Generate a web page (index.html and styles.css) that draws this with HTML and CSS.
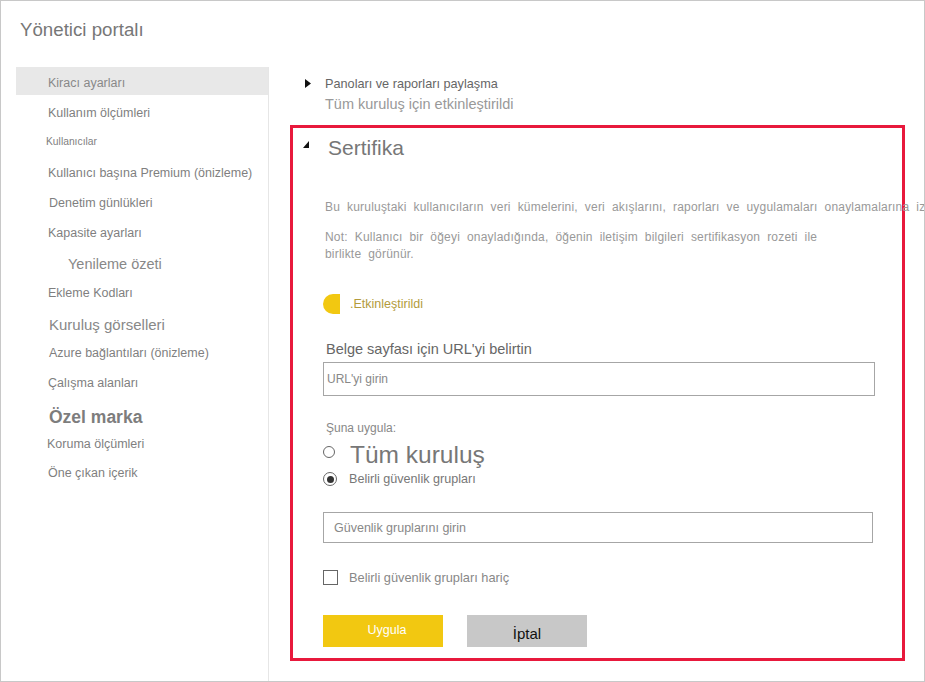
FILE: index.html
```html
<!DOCTYPE html>
<html lang="tr">
<head>
<meta charset="utf-8">
<title>Yönetici portalı</title>
<link rel="stylesheet" href="styles.css">
</head>
<body>
<div class="frame">
  <h1 class="title">Yönetici portalı</h1>
  <div class="layout">
    <nav class="sidebar">
      <div class="item selected">Kiracı ayarları</div>
      <div class="item first">Kullanım ölçümleri</div>
      <div class="item small">Kullanıcılar</div>
      <div class="item">Kullanıcı başına Premium (önizleme)</div>
      <div class="item shifted">Denetim günlükleri</div>
      <div class="item">Kapasite ayarları</div>
      <div class="item sub">Yenileme özeti</div>
      <div class="item">Ekleme Kodları</div>
      <div class="item large">Kuruluş görselleri</div>
      <div class="item shifted">Azure bağlantıları (önizleme)</div>
      <div class="item">Çalışma alanları</div>
      <div class="item brand">Özel marka</div>
      <div class="item tight">Koruma ölçümleri</div>
      <div class="item">Öne çıkan içerik</div>
    </nav>
    <main class="main">
      <div class="setting">
        <svg class="caret-right" width="6" height="9" viewBox="0 0 6 9"><polygon points="0,0 6,4.5 0,9" fill="#111"/></svg>
        <div>
          <div class="setting-name">Panoları ve raporları paylaşma</div>
          <div class="setting-status">Tüm kuruluş için etkinleştirildi</div>
        </div>
      </div>
      <section class="panel">
        <div class="panel-head">
          <svg class="caret-down" width="6" height="7" viewBox="0 0 6 7"><polygon points="6,0 6,7 0,7" fill="#111"/></svg>
          <h2 class="panel-title">Sertifika</h2>
        </div>
        <p class="desc">Bu kuruluştaki kullanıcıların veri kümelerini, veri akışlarını, raporları ve uygulamaları onaylamalarına izin verin.</p>
        <p class="note">Not: Kullanıcı bir öğeyi onayladığında, öğenin iletişim bilgileri sertifikasyon rozeti ile birlikte görünür.</p>
        <div class="toggle-row">
          <span class="toggle"></span>
          <span class="toggle-label">.Etkinleştirildi</span>
        </div>
        <div class="field-label">Belge sayfası için URL'yi belirtin</div>
        <div class="input url">URL'yi girin</div>
        <div class="apply-label">Şuna uygula:</div>
        <div class="radio-row big">
          <span class="radio"></span>
          <span class="radio-text-big">Tüm kuruluş</span>
        </div>
        <div class="radio-row">
          <span class="radio checked"></span>
          <span class="radio-text">Belirli güvenlik grupları</span>
        </div>
        <div class="input groups">Güvenlik gruplarını girin</div>
        <div class="check-row">
          <span class="checkbox"></span>
          <span class="check-text">Belirli güvenlik grupları hariç</span>
        </div>
        <div class="buttons">
          <button class="btn primary">Uygula</button>
          <button class="btn secondary">İptal</button>
        </div>
      </section>
    </main>
  </div>
</div>
</body>
</html>
```

FILE: styles.css
```css
* { box-sizing: border-box; }
html, body { margin: 0; padding: 0; background: #fff; }
body {
  font-family: "Liberation Sans", Arial, sans-serif;
  color: #808080;
}
.frame {
  width: 925px;
  height: 682px;
  border: 1px solid #c8c8c8;
  overflow: hidden;
  display: flex;
  flex-direction: column;
}
.title {
  margin: 0;
  padding: 18px 0 0 19px;
  height: 66px;
  font-size: 18.7px;
  line-height: 22px;
  font-weight: normal;
  color: #777;
}
.layout {
  flex: 1;
  display: flex;
}
.sidebar {
  width: 253px;
  margin-left: 15px;
  border-right: 1px solid #e6e6e6;
  flex-shrink: 0;
}
.item {
  height: 30px;
  line-height: 30px;
  padding-left: 32px;
  font-size: 12.5px;
  color: #7f7f7f;
  white-space: nowrap;
}
.item.selected {
  height: 28px;
  line-height: 32px;
  background: #e8e8e8;
  color: #888;
}
.item.first { margin-top: 3px; }
.item.shifted { padding-left: 33px; }
.item.small { font-size: 10.3px; padding-left: 30px; line-height: 28px; }
.item.sub { font-size: 14.5px; padding-left: 52px; line-height: 32px; color: #888; }
.item.large { font-size: 15px; line-height: 34px; padding-left: 33px; color: #888; }
.item.brand { font-size: 17.5px; font-weight: bold; height: 31px; line-height: 38px; padding-left: 33px; color: #7d7d7d; }
.item.tight { height: 29px; padding-left: 31px; }

.main {
  flex: 1;
  padding-top: 9px;
  min-width: 0;
}
.setting {
  display: flex;
  align-items: flex-start;
  padding-left: 36px;
}
.caret-right { margin-top: 3px; margin-right: 14px; flex-shrink: 0; }
.setting-name { font-size: 12.7px; color: #666; line-height: 16px; }
.setting-status { font-size: 14.5px; color: #999; line-height: 20px; margin-top: 2px; }

.panel {
  margin: 11px 0 0 21px;
  width: 615px;
  height: 536px;
  border: 3px solid #e8193c;
  padding: 0 0 0 30px;
}
.panel-head {
  display: flex;
  align-items: center;
  margin-left: -20px;
  margin-top: 8px;
  height: 24px;
}
.caret-down { margin-right: 19px; margin-top: -8px; }
.panel-title {
  margin: 0;
  font-size: 21px;
  font-weight: normal;
  color: #777;
  line-height: 24px;
}
.desc, .note {
  font-size: 12px;
  color: #999;
  letter-spacing: 0.2px;
  word-spacing: 3.4px;
}
.desc {
  margin: 39px 0 0 2px;
  line-height: 16px;
  white-space: nowrap;
}
.note {
  margin: 14px 0 0 2px;
  width: 510px;
  line-height: 17px;
}
.toggle-row {
  display: flex;
  align-items: center;
  margin-top: 31px;
  height: 20px;
}
.toggle {
  width: 17px;
  height: 20px;
  background: #f2c811;
  border-radius: 10px 0 0 10px;
}
.toggle-label {
  margin-left: 10px;
  font-size: 12.5px;
  color: #b39b3c;
}
.field-label {
  margin: 26px 0 0 3px;
  font-size: 14.5px;
  line-height: 18px;
  color: #666;
}
.input {
  border: 1px solid #a6a6a6;
  font-size: 12px;
  color: #888;
  display: flex;
  align-items: center;
}
.input.url {
  margin-top: 4px;
  width: 552px;
  height: 34px;
  padding-left: 3px;
}
.apply-label {
  margin: 25px 0 0 3px;
  font-size: 12px;
  line-height: 14px;
  color: #888;
}
.radio-row {
  display: flex;
  align-items: center;
  height: 16px;
  margin-top: 3px;
}
.radio-row.big { height: 26px; margin-top: 7px; align-items: flex-start; }
.radio {
  width: 14px;
  height: 14px;
  border: 1px solid #666;
  border-radius: 50%;
  display: flex;
  align-items: center;
  justify-content: center;
  flex-shrink: 0;
}
.radio-row.big .radio { width: 12px; height: 12px; margin-top: 4px; }
.radio.checked::after {
  content: "";
  width: 7px;
  height: 7px;
  border-radius: 50%;
  background: #333;
}
.radio-text-big {
  margin-left: 15px;
  font-size: 24.5px;
  line-height: 26px;
  color: #777;
}
.radio-text {
  margin-left: 12px;
  font-size: 12.6px;
  color: #777;
}
.input.groups {
  margin: 25px 0 0 0;
  width: 550px;
  height: 31px;
  padding-left: 10px;
  font-size: 12.5px;
}
.check-row {
  display: flex;
  align-items: center;
  margin-top: 26px;
  height: 16px;
}
.checkbox {
  width: 15px;
  height: 15px;
  border: 1px solid #666;
}
.check-text {
  margin-left: 11px;
  font-size: 12.8px;
  color: #888;
}
.buttons {
  display: flex;
  gap: 24px;
  margin-top: 30px;
}
.btn {
  width: 120px;
  height: 32px;
  border: none;
  font-family: "Liberation Sans", Arial, sans-serif;
  padding: 0;
}
.btn.primary {
  background: #f2c811;
  color: #fff;
  font-size: 12.5px;
  padding: 0 0 2px 8px;
}
.btn.secondary {
  background: #c8c8c8;
  color: #111;
  font-size: 15px;
  padding-top: 4px;
}
```
